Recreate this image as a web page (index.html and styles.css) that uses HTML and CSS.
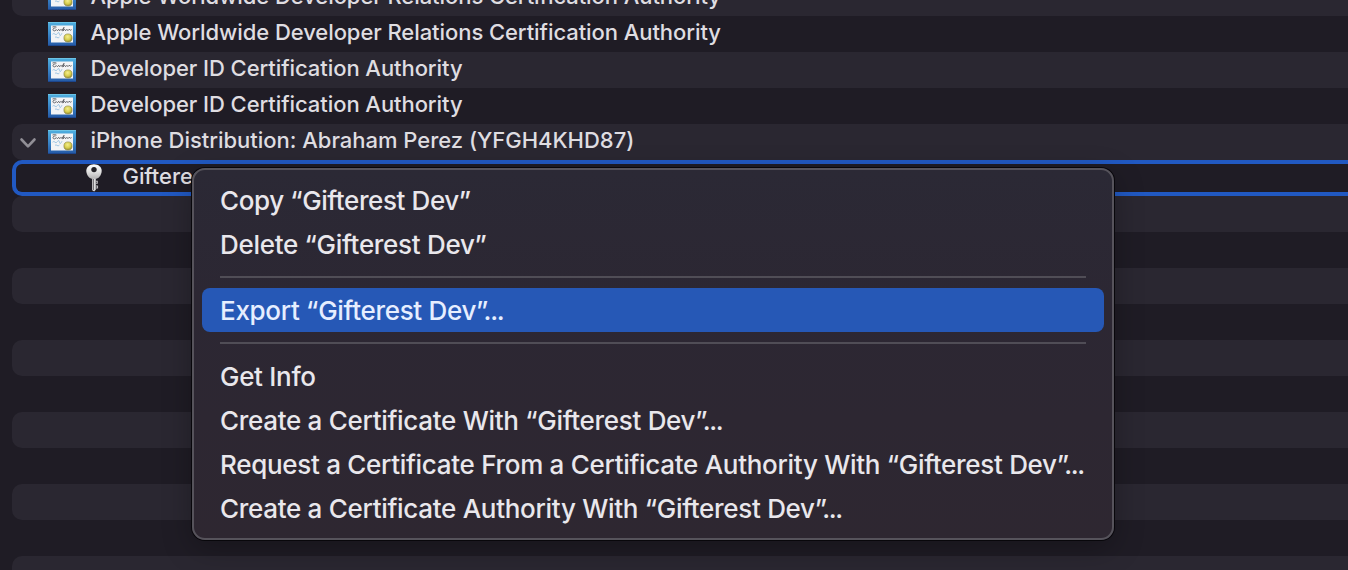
FILE: index.html
```html
<!DOCTYPE html>
<html lang="en">
<head>
<meta charset="utf-8">
<title>Keychain Access</title>
<link rel="stylesheet" href="styles.css">
</head>
<body>
<svg class="defs" width="0" height="0" aria-hidden="true">
  <defs>
    <linearGradient id="frame" x1="0" y1="0" x2="0" y2="1">
      <stop offset="0" stop-color="#4fb0e0"/><stop offset=".5" stop-color="#3a86c8"/><stop offset="1" stop-color="#2458a4"/>
    </linearGradient>
    <radialGradient id="seal" cx=".45" cy=".35" r=".65">
      <stop offset="0" stop-color="#f4ee8c"/><stop offset=".6" stop-color="#d6cc4c"/><stop offset="1" stop-color="#8f872e"/>
    </radialGradient>
    <linearGradient id="metal" x1="0" y1="0" x2="0" y2="1">
      <stop offset="0" stop-color="#ffffff"/><stop offset=".5" stop-color="#e2e2e2"/><stop offset="1" stop-color="#b4b2b4"/>
    </linearGradient>
    <symbol id="cert" viewBox="0 0 28 24">
      <rect width="28" height="24" fill="url(#frame)"/>
      <path d="M0 .5H28" stroke="#6cc3e6"/>
      <path d="M0 23.500H28" stroke="#1d468c"/>
      <rect x="3" y="3.500" width="22" height="17" fill="#f3f4f6"/>
      <path d="M4.500 5q2-.8 4 .1M7.500 6c-3-.4-3.300 3-1 2.900l2-1.200 1 1 1.200-1.400 1 1.400 1.300-1.400 1 1.200 2-3.200-1.200 3.700 1.800-1.700 1 1.400 1.300-1.400 1 1.300 1.200-1.300 1.500.9 1-.6" fill="none" stroke="#55575c" stroke-width=".9"/>
      <path d="M4.500 12.200q1.500-1.500 2.500 0t2.500-.8 2 .8 2.500-1M7 15.400q1-1.200 2 0t2.500-.4" fill="none" stroke="#8cbadd" stroke-width=".8"/>
      <circle cx="20" cy="16" r="4.100" fill="url(#seal)" stroke="#8b8745" stroke-width=".6"/>
    </symbol>
  </defs>
</svg>
<main class="window">
  <div class="list">
    <div class="row"><svg class="cert"><use href="#cert"/></svg><span class="label">Apple Worldwide Developer Relations Certification Authority</span></div>
    <div class="row"><svg class="cert"><use href="#cert"/></svg><span class="label">Apple Worldwide Developer Relations Certification Authority</span></div>
    <div class="row"><svg class="cert"><use href="#cert"/></svg><span class="label">Developer ID Certification Authority</span></div>
    <div class="row"><svg class="cert"><use href="#cert"/></svg><span class="label">Developer ID Certification Authority</span></div>
    <div class="row open">
      <svg class="chevron" viewBox="0 0 18 12"><path d="M2.500 2.500 9 9.300 15.500 2.500"/></svg>
      <svg class="cert"><use href="#cert"/></svg><span class="label identity">iPhone Distribution: Abraham Perez (YFGH4KHD87)</span>
    </div>
    <div class="row selected">
      <svg class="key" viewBox="0 0 16 28">
        <path d="M6.200 12V26.200L8.200 27.500 9.800 25.800V12Z" fill="#dedddf"/>
        <path d="M9.800 17.300h1.500v2h-1.500M9.800 22h1.700v2h-1.700" fill="none" stroke="#bbb9bd" stroke-width="1.100"/>
        <path d="M7.500 15V26" stroke="#5d5a60" stroke-width=".8"/>
        <path d="M8 .3C3.600.3.300 3.200.3 6.800c0 3.500 2.200 7.200 5.200 8h5c3-.8 5.200-4.500 5.200-8C15.700 3.200 12.400.3 8 .3Z" fill="url(#metal)"/>
        <circle cx="8" cy="5.600" r="2.700" fill="#242127"/>
      </svg>
      <span class="label">Gifterest Dev</span>
    </div>
    <div class="row"></div><div class="row"></div><div class="row"></div><div class="row"></div>
    <div class="row"></div><div class="row"></div><div class="row"></div><div class="row"></div>
    <div class="row"></div><div class="row"></div><div class="row"></div>
  </div>
  <div class="menu">
    <div class="item copy"><span>Copy “Gifterest Dev”</span></div>
    <div class="item"><span>Delete “Gifterest Dev”</span></div>
    <div class="separator"></div>
    <div class="item active"><span>Export “Gifterest Dev”<span class="dots">...</span></span></div>
    <div class="separator"></div>
    <div class="item"><span>Get Info</span></div>
    <div class="item"><span>Create a Certificate With “Gifterest Dev”<span class="dots">...</span></span></div>
    <div class="item"><span>Request a Certificate From a Certificate Authority With “Gifterest Dev”<span class="dots">...</span></span></div>
    <div class="item"><span>Create a Certificate Authority With “Gifterest Dev”<span class="dots">...</span></span></div>
  </div>
</main>
</body>
</html>
```
FILE: styles.css
```css
* { box-sizing: border-box; }
body { margin: 0; overflow: hidden; background: #1f1c25; font-family: Inter, "Liberation Sans", sans-serif; font-weight: 500; }
.defs { display: block; height: 0; }
.window { position: relative; height: 570px; overflow: hidden; }
.list { margin-top: -20px; padding-left: 12px; }
.row { display: flex; align-items: center; height: 36px; padding-left: 36px; border-radius: 10px 0 0 10px; }
.row:nth-child(odd) { background: #2a2731; }
.cert { width: 28px; height: 24px; flex: none; margin-right: 14.500px; }
.label { font-size: 22px; line-height: 32px; padding-bottom: 5px; color: #dfdde1; white-space: nowrap; letter-spacing: -.07px; }
.identity { letter-spacing: -.02px; }
.open { padding-left: 7px; }
.chevron { width: 18px; height: 12px; margin-right: 11px; flex: none; position: relative; top: 1px; }
.chevron path { fill: none; stroke: #918f96; stroke-width: 2.600; stroke-linecap: round; stroke-linejoin: round; }
.selected { border: 4px solid #2159c2; border-right: 0; padding-left: 70px; }
.key { width: 16px; height: 28px; margin-right: 20.500px; flex: none; }
.menu {
  position: absolute; left: 192px; top: 168px; width: 922px; height: 372px;
  padding: 8px; border: 2px solid #56535b; border-radius: 13px;
  background: linear-gradient(#2b2935, #2c2733 35%, #2e2731);
  box-shadow: 0 0 0 1px #08070b, 0 8px 30px rgba(0, 0, 0, .28);
}
.item { display: flex; align-items: center; height: 44px; padding: 2px 18px 0 18px; border-radius: 8px; font-size: 26px; line-height: 42px; letter-spacing: -.3px; color: #e9e7ec; white-space: nowrap; }
.copy { letter-spacing: -.4px; }
.dots { margin-left: -4.500px; letter-spacing: -1.300px; }
.active { background: #2658b6; color: #e6eeff; }
.separator { height: 22px; padding: 10px 18px 0; }
.separator::before { content: ""; display: block; height: 2px; background: #504d56; }
```
